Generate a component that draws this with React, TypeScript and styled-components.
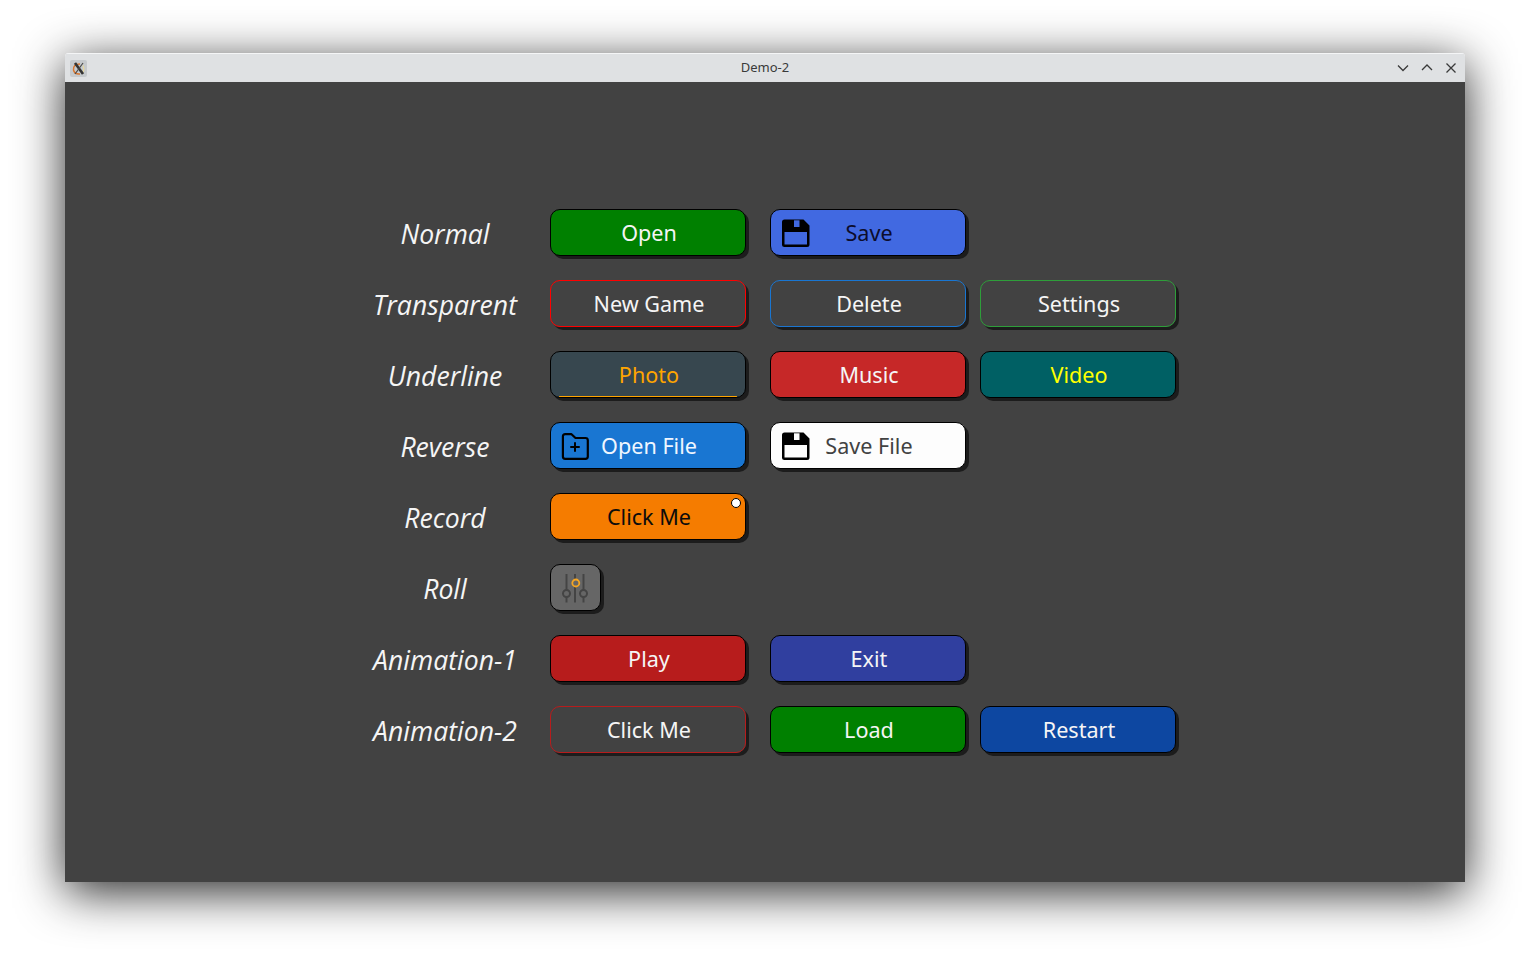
import React from "react";
import styled, { createGlobalStyle } from "styled-components";

const Global = createGlobalStyle`
  html, body { margin: 0; padding: 0; background: #fff; height: 959px; overflow: hidden; }
`;

const Desktop = styled.div`
  width: 1530px;
  height: 959px;
  padding: 53px 65px 0;
  box-sizing: border-box;
  background: #fff;
  font-family: "Noto Sans", "Open Sans", sans-serif;
`;

const Window = styled.div`
  width: 1400px;
  height: 829px;
  display: flex;
  flex-direction: column;
  border-radius: 4px 4px 0 0;
  box-shadow: 0 10px 48px rgba(0, 0, 0, 0.85);
  overflow: hidden;
`;

const TitleBar = styled.div`
  height: 29px;
  flex: none;
  position: relative;
  display: flex;
  align-items: center;
  justify-content: space-between;
  padding: 0 6px 0 5px;
  background: #dfe1e3;
  border-top: 1px solid #f4f5f6;
  box-sizing: border-box;
`;

const AppIcon = styled.div`
  width: 17px;
  height: 17px;
  background: #c6cacd;
  border-radius: 2px;
  display: flex;
`;

const Title = styled.div`
  position: absolute;
  left: 0;
  right: 0;
  top: 0;
  text-align: center;
  font-size: 13px;
  line-height: 26px;
  color: #3a3a3a;
`;

const WinControls = styled.div`
  display: flex;
  gap: 8px;
  position: relative;
`;

const Content = styled.div`
  flex: 1;
  background: #424242;
  padding: 127px 0 0 275px;
  display: flex;
  flex-direction: column;
  gap: 24px;
`;

const Row = styled.div`
  display: grid;
  grid-template-columns: 210px 220px 210px 196px;
  height: 47px;
  align-items: start;
`;

const Label = styled.div`
  font-style: italic;
  font-size: 26.6px;
  font-family: "Open Sans", "Noto Sans", sans-serif;
  color: #f5f5f5;
  text-align: center;
  line-height: 51px;
`;

const Button = styled.div<{
  $bg: string;
  $fg: string;
  $border?: string;
}>`
  position: relative;
  width: 196px;
  height: 47px;
  box-sizing: border-box;
  border: 1px solid ${(p) => p.$border ?? "#000"};
  border-radius: 10px;
  background: ${(p) => p.$bg};
  color: ${(p) => p.$fg};
  box-shadow: 3px 3px 0 #1c1c1c;
  display: flex;
  align-items: center;
  justify-content: center;
  padding-left: 2px;
  font-size: 21.6px;
  line-height: 45px;
  overflow: hidden;
`;

const IconSlot = styled.span<{ $paper: string }>`
  position: absolute;
  left: 9px;
  top: 7px;
  width: 30px;
  height: 30px;
  display: flex;
  color: ${(p) => p.$paper};
`;

const Underline = styled.span<{ $color: string }>`
  position: absolute;
  left: 8px;
  right: 8px;
  bottom: 0;
  height: 1px;
  background: ${(p) => p.$color};
`;

const RecordDot = styled.span`
  position: absolute;
  right: 4px;
  top: 4px;
  width: 8px;
  height: 8px;
  border-radius: 50%;
  background: #fff;
  border: 1px solid #000;
`;

const RollButton = styled(Button)`
  width: 51px;
  padding-left: 0;
`;

const Floppy = () => (
  <svg width="30" height="30" viewBox="0 0 30 30" fill="none">
    <path
      d="M4.500 2.500H23.500L29.500 8.500V27.500Q29.500 30 27 30H4.500Q2 30 2 27.500V5Q2 2.500 4.500 2.500ZM4.500 15V27.500H27V15Z"
      fill="#000"
      fillRule="evenodd"
    />
    <rect x="14" y="3.300" width="5.500" height="6.700" fill="currentColor" />
  </svg>
);

const FolderPlus = () => (
  <svg width="30" height="30" viewBox="0 0 30 30" fill="none" stroke="#000" strokeWidth="2.200" strokeLinecap="round" strokeLinejoin="round">
    <path d="M2.900 6.500Q2.900 4.200 5.200 4.200H11.500L15.500 8H25.500Q27.800 8 27.800 10.300V26.500Q27.800 28.800 25.500 28.800H5.200Q2.900 28.800 2.900 26.500Z" />
    <path d="M15 13V21M11 17H19" strokeWidth="2" />
  </svg>
);

const Sliders = () => (
  <svg width="30" height="30" viewBox="0 0 30 30" fill="none">
    <g stroke="#444" strokeWidth="2">
      <path d="M5.500 1V17M5.500 24V29.500M14 1V29.500M22.500 1V17M22.500 24V29.500" />
      <circle cx="5.500" cy="20.500" r="3.500" />
      <circle cx="22.500" cy="20.500" r="3.500" />
    </g>
    <circle cx="14.800" cy="10" r="3.500" fill="#666" stroke="#f5a623" strokeWidth="1.800" />
  </svg>
);

const XLogo = () => (
  <svg width="17" height="17" viewBox="0 0 17 17" fill="none">
    <path d="M10 4Q3 4 3.500 10Q4.500 14.500 10 14" stroke="#d9762e" strokeWidth="1.500" />
    <path d="M13 5.500Q15 10 12 13.500" stroke="#e8d9a0" strokeWidth="1.200" />
    <path d="M5 3L13 14" stroke="#333" strokeWidth="2.600" />
    <path d="M13 3L5 14" stroke="#4a4a4a" strokeWidth="1.200" />
  </svg>
);

const ChromeIcon = ({ d }: { d: string }) => (
  <svg width="16" height="16" viewBox="0 0 16 16" fill="none" stroke="#3a3a3a" strokeWidth="1.300">
    <path d={d} />
  </svg>
);

export default function App() {
  return (
    <>
      <Global />
      <Desktop>
        <Window>
          <TitleBar>
            <Title>Demo-2</Title>
            <AppIcon>
              <XLogo />
            </AppIcon>
            <WinControls>
              <ChromeIcon d="M3 5.500L8 10.500L13 5.500" />
              <ChromeIcon d="M3 10L8 5L13 10" />
              <ChromeIcon d="M3.500 3.500L12.500 12.500M12.500 3.500L3.500 12.500" />
            </WinControls>
          </TitleBar>
          <Content>
            <Row>
              <Label>Normal</Label>
              <Button $bg="#008000" $fg="#f5f5f5">Open</Button>
              <Button $bg="#4169e1" $fg="#0c0c2c">
                <IconSlot $paper="#4169e1"><Floppy /></IconSlot>
                Save
              </Button>
            </Row>
            <Row>
              <Label>Transparent</Label>
              <Button $bg="transparent" $fg="#f5f5f5" $border="#ff0000">New Game</Button>
              <Button $bg="transparent" $fg="#f5f5f5" $border="#1976d2">Delete</Button>
              <Button $bg="transparent" $fg="#f5f5f5" $border="#2e9e3a">Settings</Button>
            </Row>
            <Row>
              <Label>Underline</Label>
              <Button $bg="#37474f" $fg="#ffa500">
                Photo
                <Underline $color="#ffa500" />
              </Button>
              <Button $bg="#c62828" $fg="#f5f5f5">Music</Button>
              <Button $bg="#006064" $fg="#ffff00">Video</Button>
            </Row>
            <Row>
              <Label>Reverse</Label>
              <Button $bg="#1976d2" $fg="#f0f6ff">
                <IconSlot $paper="#1976d2"><FolderPlus /></IconSlot>
                Open File
              </Button>
              <Button $bg="#fdfdfd" $fg="#424242">
                <IconSlot $paper="#fdfdfd"><Floppy /></IconSlot>
                Save File
              </Button>
            </Row>
            <Row>
              <Label>Record</Label>
              <Button $bg="#f57c00" $fg="#0c0c0c">
                Click Me
                <RecordDot />
              </Button>
            </Row>
            <Row>
              <Label>Roll</Label>
              <RollButton $bg="#666" $fg="#fff"><Sliders /></RollButton>
            </Row>
            <Row>
              <Label>Animation-1</Label>
              <Button $bg="#b71c1c" $fg="#f5f5f5">Play</Button>
              <Button $bg="#303f9f" $fg="#f5f5f5">Exit</Button>
            </Row>
            <Row>
              <Label>Animation-2</Label>
              <Button $bg="transparent" $fg="#f5f5f5" $border="#b71c1c">Click Me</Button>
              <Button $bg="#008000" $fg="#f5f5f5">Load</Button>
              <Button $bg="#0d47a1" $fg="#f5f5f5">Restart</Button>
            </Row>
          </Content>
        </Window>
      </Desktop>
    </>
  );
}
